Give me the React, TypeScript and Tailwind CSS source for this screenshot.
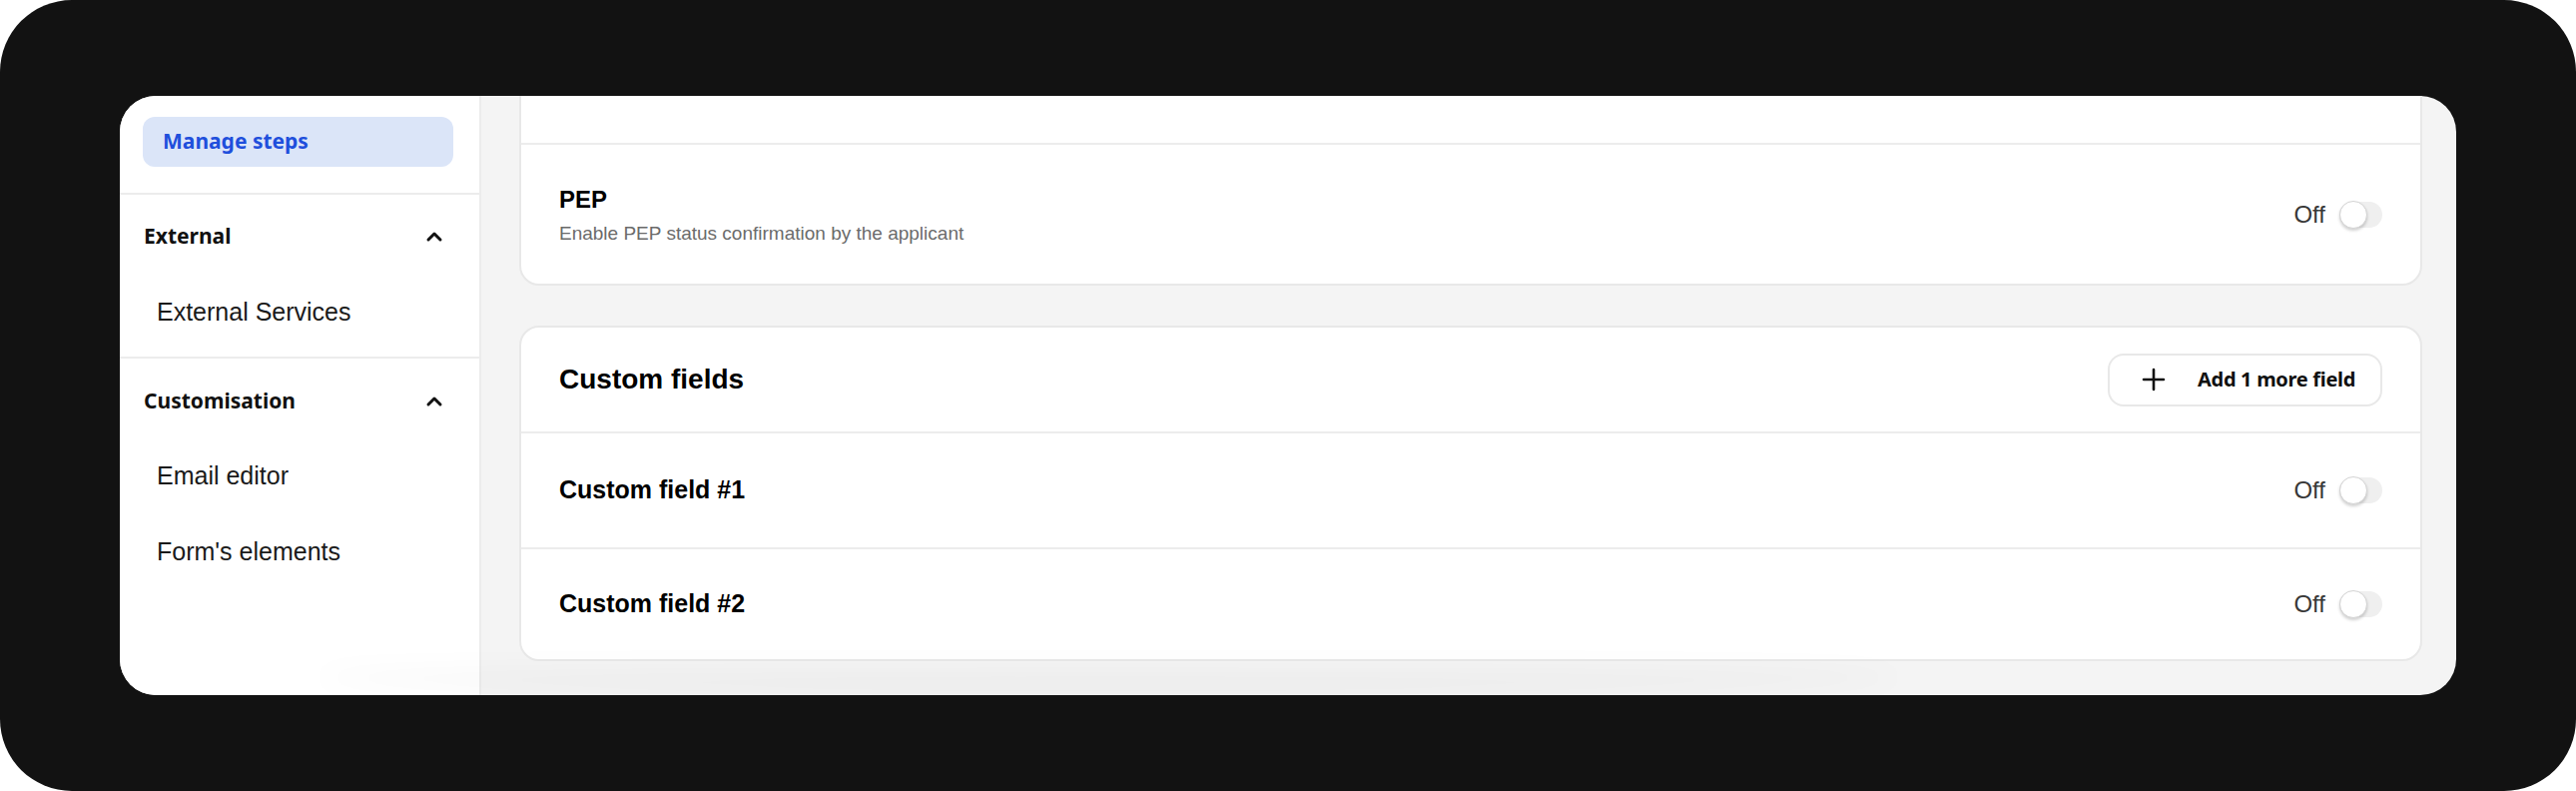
import { ChevronUp } from "lucide-react";

const sections = [
  { title: "External", items: ["External Services"], head: "h-[84px]", item: "h-[68px]", pb: "pb-[10px]" },
  { title: "Customisation", items: ["Email editor", "Form's elements"], head: "h-[80px] pt-[6px]", item: "h-[76px]", pb: "pb-0" },
];

const humanist = "font-['Noto_Sans',sans-serif]";
const helv = "font-['Liberation_Sans',Arial,sans-serif]";

function Toggle() {
  return (
    <div className="flex items-center gap-[14px]">
      <span className={`${helv} text-[24px] leading-none text-[#383838]`}>Off</span>
      <span className="relative block h-[26px] w-[43px] rounded-full bg-[#efefef]">
        <span className="absolute -top-px left-0 block h-[28px] w-[28px] rounded-full border border-[#d4d4d4] bg-white shadow-[0_2px_3px_rgba(0,0,0,0.18)]" />
      </span>
    </div>
  );
}

function FieldRow({ label, height }: { label: string; height: string }) {
  return (
    <div className={`flex ${height} items-center justify-between border-t-2 border-[#ececec] pl-[38px] pr-[38px]`}>
      <span className={`${helv} text-[25px] font-bold text-black`}>{label}</span>
      <Toggle />
    </div>
  );
}

export default function App() {
  return (
    <div className="h-[792px] w-[2580px] bg-white">
      <div className="h-full w-full rounded-[72px] bg-[#121212] px-[120px] py-[96px]">
        <div className="relative flex h-[600px] overflow-hidden rounded-[36px] bg-[#f4f4f4]">
          {/* sidebar */}
          <aside className="w-[362px] shrink-0 border-r-2 border-[#ececec] bg-white">
            <div className="pb-[26px] pt-[21px]">
              <div className="ml-[23px] flex h-[50px] w-[311px] items-center rounded-[12px] bg-[#dbe5f8] pl-[20px]">
                <span className={`${humanist} text-[21px] font-bold text-[#1f4fdc]`}>Manage steps</span>
              </div>
            </div>
            {sections.map((s) => (
              <div key={s.title} className={`border-t-2 border-[#ececec] ${s.pb}`}>
                <div className={`flex ${s.head} items-center justify-between pl-[24px] pr-[33px]`}>
                  <span className={`${humanist} text-[21px] font-bold text-[#111]`}>{s.title}</span>
                  <ChevronUp size={24} strokeWidth={3} className="text-[#111]" />
                </div>
                {s.items.map((item) => (
                  <div key={item} className={`flex ${s.item} items-center pl-[37px]`}>
                    <span className={`${helv} text-[25px] text-[#1a1a1a]`}>{item}</span>
                  </div>
                ))}
              </div>
            ))}
          </aside>

          {/* main */}
          <main className="flex flex-1 flex-col gap-[40px] pl-[38px] pr-[34px]">
            <div className="-mt-[60px] rounded-[20px] border-2 border-[#e8e8e8] bg-white">
              <div className="h-[105px]" />
              <div className="flex h-[141px] items-center justify-between border-t-2 border-[#ececec] pl-[38px] pr-[38px]">
                <div className="flex flex-col gap-[12px] pt-[2px]">
                  <span className={`${helv} text-[24px] font-bold leading-none text-black`}>PEP</span>
                  <span className={`${helv} text-[19px] leading-none text-[#6b6b6b]`}>
                    Enable PEP status confirmation by the applicant
                  </span>
                </div>
                <Toggle />
              </div>
            </div>

            <div className="rounded-[20px] border-2 border-[#e8e8e8] bg-white">
              <div className="flex h-[104px] items-center justify-between pl-[38px] pr-[38px]">
                <span className={`${helv} text-[28px] font-bold text-black`}>Custom fields</span>
                <button className="flex h-[53px] w-[275px] items-center rounded-[16px] border-2 border-[#e8e8e8] bg-white pl-[32px]">
                  <svg width="24" height="24" viewBox="0 0 24 24" fill="none" stroke="#111" strokeWidth="2.6" strokeLinecap="round">
                    <path d="M12 2v20M2 12h20" />
                  </svg>
                  <span className={`${humanist} ml-[32px] text-[20px] font-bold tracking-[-0.3px] text-[#111]`}>
                    Add 1 more field
                  </span>
                </button>
              </div>
              <FieldRow label="Custom field #1" height="h-[116px]" />
              <FieldRow label="Custom field #2" height="h-[112px]" />
            </div>
          </main>

          <div className="pointer-events-none absolute bottom-0 left-[200px] right-[560px] h-[36px] rounded-[50%] bg-gradient-to-t from-black/[0.05] to-transparent blur-md" />
        </div>
      </div>
    </div>
  );
}
